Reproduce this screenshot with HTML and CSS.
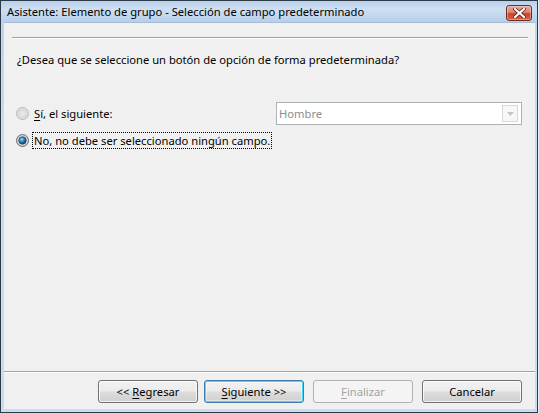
FILE: index.html
```html
<!DOCTYPE html>
<html lang="es">
<head>
<meta charset="utf-8">
<title>Asistente</title>
<link rel="stylesheet" href="styles.css">
</head>
<body>
<div class="window">
  <div class="titlebar">
    <span class="title">Asistente: Elemento de grupo - Selección de campo predeterminado</span>
    <div class="close">
      <svg width="13" height="10" viewBox="0 0 13 10"><path d="M2 1 L11 9 M11 1 L2 9" stroke="#5a1a10" stroke-width="3.6" stroke-linecap="square"/><path d="M2 1 L11 9 M11 1 L2 9" stroke="#ffffff" stroke-width="2.2" stroke-linecap="square"/></svg>
    </div>
  </div>
  <div class="client">
    <div class="rule rule-top"></div>
    <p class="question">¿Desea que se seleccione un botón de opción de forma predeterminada?</p>
    <div class="row row-yes">
      <span class="radio">
        <svg width="13" height="13" viewBox="0 0 13 13"><defs><radialGradient id="ru" cx="0.5" cy="0.5" r="0.5"><stop offset="0" stop-color="#f4f4f4"/><stop offset="1" stop-color="#d8d8d8"/></radialGradient></defs><circle cx="6.5" cy="6.5" r="6" fill="url(#ru)" stroke="#b9b9b9"/><circle cx="6.5" cy="6.5" r="3.6" fill="#e6e6e6" stroke="#d0d0d0" stroke-width="0.8"/></svg>
      </span>
      <span class="label"><u>S</u>í, el siguiente:</span>
      <div class="combo">
        <span class="combo-text">Hombre</span>
        <span class="combo-btn"><svg width="7" height="4" viewBox="0 0 7 4"><path d="M0 0 H7 L3.5 4 Z" fill="#c4c4c4"/></svg></span>
      </div>
    </div>
    <div class="row row-no">
      <span class="radio">
        <svg width="13" height="13" viewBox="0 0 13 13"><defs><radialGradient id="rc" cx="0.5" cy="0.5" r="0.5"><stop offset="0" stop-color="#f0f0f0"/><stop offset="1" stop-color="#c9c9c9"/></radialGradient><radialGradient id="dot" cx="0.4" cy="0.35" r="0.6"><stop offset="0" stop-color="#a9dcf7"/><stop offset="0.5" stop-color="#2f87c8"/><stop offset="1" stop-color="#163e66"/></radialGradient></defs><circle cx="6.5" cy="6.5" r="6" fill="url(#rc)" stroke="#6e6e6e"/><circle cx="6.5" cy="6.5" r="3.7" fill="url(#dot)" stroke="#1d4f7a" stroke-width="0.8"/></svg>
      </span>
      <span class="label focus">No, no debe ser seleccionado ningún campo.</span>
    </div>
    <div class="footer">
      <div class="rule rule-bottom"></div>
      <div class="buttons">
        <button class="btn btn-back">&lt;&lt; <u>R</u>egresar</button>
        <button class="btn btn-default"><u>S</u>iguiente &gt;&gt;</button>
        <button class="btn btn-disabled" disabled><u>F</u>inalizar</button>
        <button class="btn">Cancelar</button>
      </div>
    </div>
  </div>
</div>
</body>
</html>
```
FILE: styles.css
```css
* { box-sizing: border-box; }
html, body { margin: 0; padding: 0; }
body {
  width: 539px;
  height: 413px;
  background: #e9eef3;
  font-family: "Noto Sans", "Open Sans", sans-serif;
  font-size: 11.2px;
  color: #000;
  overflow: hidden;
}
.window {
  width: 538px;
  height: 413px;
  border: 1px solid #2d3a47;
  background: linear-gradient(to bottom, #bcd3ec 0%, #c8dbef 30%, #c9dcf0 100%);
  padding: 0 2px 3px 3px;
  display: flex;
  flex-direction: column;
}
.titlebar {
  height: 21px;
  display: flex;
  align-items: center;
  justify-content: space-between;
  background: linear-gradient(to bottom, #b9d0ea 0%, #cddff2 40%, #b8cfe9 100%);
  margin: 0 -2px 0 -3px;
  padding: 0 4px 0 6px;
}
.title {
  font-size: 11.2px;
  color: #000;
  white-space: nowrap;
  padding-bottom: 1px;
}
.close {
  width: 26px;
  height: 16px;
  margin-top: 3px;
  margin-right: 1px;
  border: 1px solid #6b2c22;
  border-radius: 3px;
  background: linear-gradient(to bottom, #e9a99a 0%, #dc8470 45%, #c6452d 55%, #d0654a 100%);
  box-shadow: inset 0 0 0 1px rgba(255,255,255,0.35);
  display: flex;
  align-items: center;
  justify-content: center;
}
.close svg { display: block; }
.client {
  flex: 1;
  background: #f0f0f0;
  display: flex;
  flex-direction: column;
  padding-top: 14px;
  border-top: 1px solid #a8bcd3;
}
.rule {
  height: 2px;
  border-top: 1px solid #a0a0a0;
  border-bottom: 1px solid #ffffff;
}
.rule-top { margin: 0 7px 0 8px; }
.question {
  margin: 13px 0 0 13px;
  line-height: 16px;
}
.row {
  display: flex;
  align-items: center;
  padding-left: 12px;
}
.row-yes { margin-top: 34px; height: 23px; }
.row-no { margin-top: 7px; height: 17px; }
.radio { width: 13px; height: 13px; display: block; }
.radio svg { display: block; }
.label {
  margin-left: 4px;
  line-height: 15px;
  padding: 0 1px;
  white-space: nowrap;
}
.focus { outline: 1px dotted #000; outline-offset: 0; }
.combo {
  margin-left: auto;
  margin-right: 13px;
  width: 246px;
  height: 23px;
  border: 1px solid #adb2b5;
  background: #fff;
  display: flex;
  align-items: center;
  justify-content: space-between;
  padding: 0 3px 0 2px;
}
.combo-text { color: #8d8d8d; }
.combo-btn {
  width: 16px;
  height: 17px;
  border: 1px solid #d7d7d7;
  background: #f7f7f7;
  display: flex;
  align-items: center;
  justify-content: center;
}
.combo-btn svg { display: block; }
.footer { margin-top: auto; }
.rule-bottom { margin: 0; }
.buttons {
  display: flex;
  justify-content: flex-end;
  padding: 7px 13px 6px 0;
  gap: 9px;
}
.btn {
  width: 100px;
  height: 23px;
  font-family: inherit;
  font-size: 11.2px;
  color: #000;
  border: 1px solid #707070;
  border-radius: 3px;
  background: linear-gradient(to bottom, #f2f2f2 0%, #ebebeb 48%, #dddddd 52%, #cfcfcf 100%);
  box-shadow: inset 0 0 0 1px rgba(255,255,255,0.75);
  padding: 0;
  line-height: 19px;
}
.btn-back { margin-right: -3px; }
.btn-default {
  border-color: #3c7fb1;
  box-shadow: inset 0 0 0 1px #48d8f8, inset 0 0 0 2px rgba(255,255,255,0.4);
  background: linear-gradient(to bottom, #f2f2f2 0%, #ebebeb 48%, #dddddd 52%, #cfcfcf 100%);
}
.btn-disabled {
  border-color: #adb2b5;
  background: #f4f4f4;
  box-shadow: none;
  color: #a3a3a3;
}
u { text-decoration: underline; text-underline-offset: 2px; }
```
